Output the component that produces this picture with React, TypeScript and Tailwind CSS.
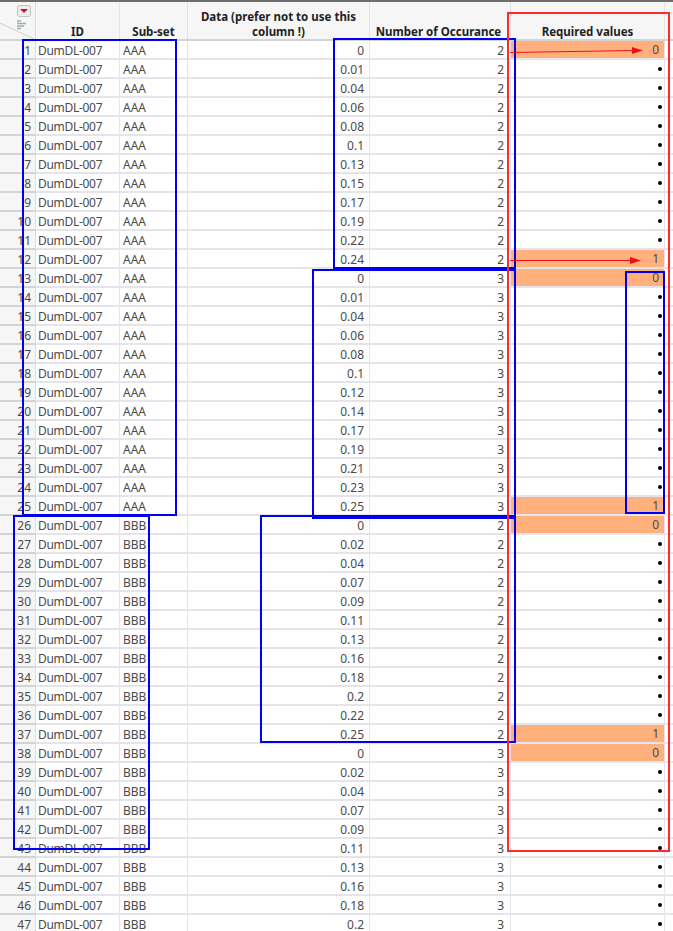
const font = { fontFamily: '"Noto Sans", "Open Sans", sans-serif' };

const group1 = ['0', '0.01', '0.04', '0.06', '0.08', '0.1', '0.13', '0.15', '0.17', '0.19', '0.22', '0.24'];
const group2 = ['0', '0.01', '0.04', '0.06', '0.08', '0.1', '0.12', '0.14', '0.17', '0.19', '0.21', '0.23', '0.25'];
const group3 = ['0', '0.02', '0.04', '0.07', '0.09', '0.11', '0.13', '0.16', '0.18', '0.2', '0.22', '0.25'];
const group4 = ['0', '0.02', '0.04', '0.07', '0.09', '0.11', '0.13', '0.16', '0.18', '0.2'];

const rows = [
  ...group1.map((data) => ({ subset: 'AAA', data, count: 2 })),
  ...group2.map((data) => ({ subset: 'AAA', data, count: 3 })),
  ...group3.map((data) => ({ subset: 'BBB', data, count: 2 })),
  ...group4.map((data) => ({ subset: 'BBB', data, count: 3 })),
];

// required column: row number -> value, the rest are missing
const required: Record<number, string> = { 1: '0', 12: '1', 13: '0', 25: '1', 26: '0', 37: '1', 38: '0' };

function Row({ n, subset, data, count }: { n: number; subset: string; data: string; count: number }) {
  const value = required[n];
  return (
    <div className="flex h-[19px] text-[12px] leading-[20px] text-[#4a4a4a]">
      <div className="w-[36px] shrink-0 border-r border-b-2 border-r-[#dcdcdc] border-b-[#d4d4d4] bg-[#f6f6f6] pr-[4px] text-right">{n}</div>
      <div className="w-[84px] shrink-0 border-r border-b-2 border-[#e4e4ea] pl-[2px] tracking-[-0.3px]">DumDL-007</div>
      <div className="w-[68px] shrink-0 border-r border-b-2 border-[#e4e4ea] pl-[3px]">{subset}</div>
      <div className="w-[182px] shrink-0 border-r border-b-2 border-[#e4e4ea] pr-[5px] text-right">{data}</div>
      <div className="w-[141px] shrink-0 border-r border-b-2 border-[#e4e4ea] pr-[6px] text-right">{count}</div>
      <div className={`flex w-[154px] shrink-0 items-center justify-end border-r border-b-2 border-[#e4e4ea] ${value ? 'bg-[#ffb07c] pr-[5px]' : 'pr-[2px]'}`}>
        {value ?? <span className="h-[4px] w-[4px] rounded-full bg-black" />}
      </div>
      <div className="flex-1 border-b-2 border-[#e4e4ea]" />
    </div>
  );
}

function Header() {
  return (
    <div className="flex h-[39px] border-b-2 border-[#d4d4d4] bg-[#f6f6f6] text-[11.5px] leading-[15px] font-bold text-[#222]">
      <div className="relative w-[36px] shrink-0 border-r border-[#dcdcdc]">
        <svg className="absolute inset-0" width="35" height="37" viewBox="0 0 35 37">
          <line x1="0" y1="21" x2="34" y2="37" stroke="#cfcfcf" />
          <rect x="17.5" y="3.5" width="13" height="11" rx="2" fill="#eeeeee" stroke="#c4c4c4" />
          <path d="M20 7 L28 7 L24 11 Z" fill="#d8102a" />
          <path d="M17 19h4M17 21.5h9M17 24h7M17 26.5h4" stroke="#9fb0a4" strokeWidth="1.4" />
        </svg>
      </div>
      <div className="flex w-[84px] shrink-0 items-end justify-center border-r border-[#e4e4e4]">ID</div>
      <div className="flex w-[68px] shrink-0 items-end justify-center border-r border-[#e4e4e4]">Sub-set</div>
      <div className="flex w-[182px] shrink-0 items-end justify-center border-r border-[#e4e4e4] px-2 text-center">Data (prefer not to use this column !)</div>
      <div className="flex w-[141px] shrink-0 items-end justify-center border-r border-[#e4e4e4] pr-[3px]">Number of Occurance</div>
      <div className="flex w-[154px] shrink-0 items-end justify-center border-r border-[#e4e4e4]">Required values</div>
      <div className="flex-1" />
    </div>
  );
}

export default function App() {
  return (
    <div className="relative h-[931px] w-[673px] overflow-hidden bg-white" style={font}>
      <div className="h-[2px] bg-[#6e6e6e]" />
      <Header />
      {rows.map((r, i) => (
        <Row key={i} n={i + 1} subset={r.subset} data={r.data} count={r.count} />
      ))}

      {/* annotations drawn on top of the table */}
      <div className="absolute top-[39px] left-[22px] h-[477px] w-[155px] border-2 border-[#0000ee]" />
      <div className="absolute top-[38px] left-[333px] h-[231px] w-[183px] border-2 border-[#0000ee]" />
      <div className="absolute top-[269px] left-[312px] h-[250px] w-[204px] border-2 border-[#0000ee]" />
      <div className="absolute top-[515px] left-[13px] h-[335px] w-[137px] border-2 border-[#0000ee]" />
      <div className="absolute top-[515px] left-[260px] h-[228px] w-[256px] border-2 border-[#0000ee]" />
      <div className="absolute top-[271px] left-[625px] h-[243px] w-[40px] border-2 border-[#0000ee]" />
      <div className="absolute top-[12px] left-[507px] h-[840px] w-[163px] border-2 border-[#ff2a2a]" />

      <svg className="absolute top-[40px] left-[505px]" width="160" height="20" viewBox="0 0 160 20">
        <line x1="5" y1="12.5" x2="130" y2="10.5" stroke="#f01010" strokeWidth="1" />
        <path d="M138 10.5 L127 7 L127 14 Z" fill="#f01010" />
      </svg>
      <svg className="absolute top-[250px] left-[505px]" width="160" height="20" viewBox="0 0 160 20">
        <line x1="5" y1="10.5" x2="130" y2="10.5" stroke="#f01010" strokeWidth="1" />
        <path d="M136 10.5 L125 7 L125 14 Z" fill="#f01010" />
      </svg>
    </div>
  );
}
